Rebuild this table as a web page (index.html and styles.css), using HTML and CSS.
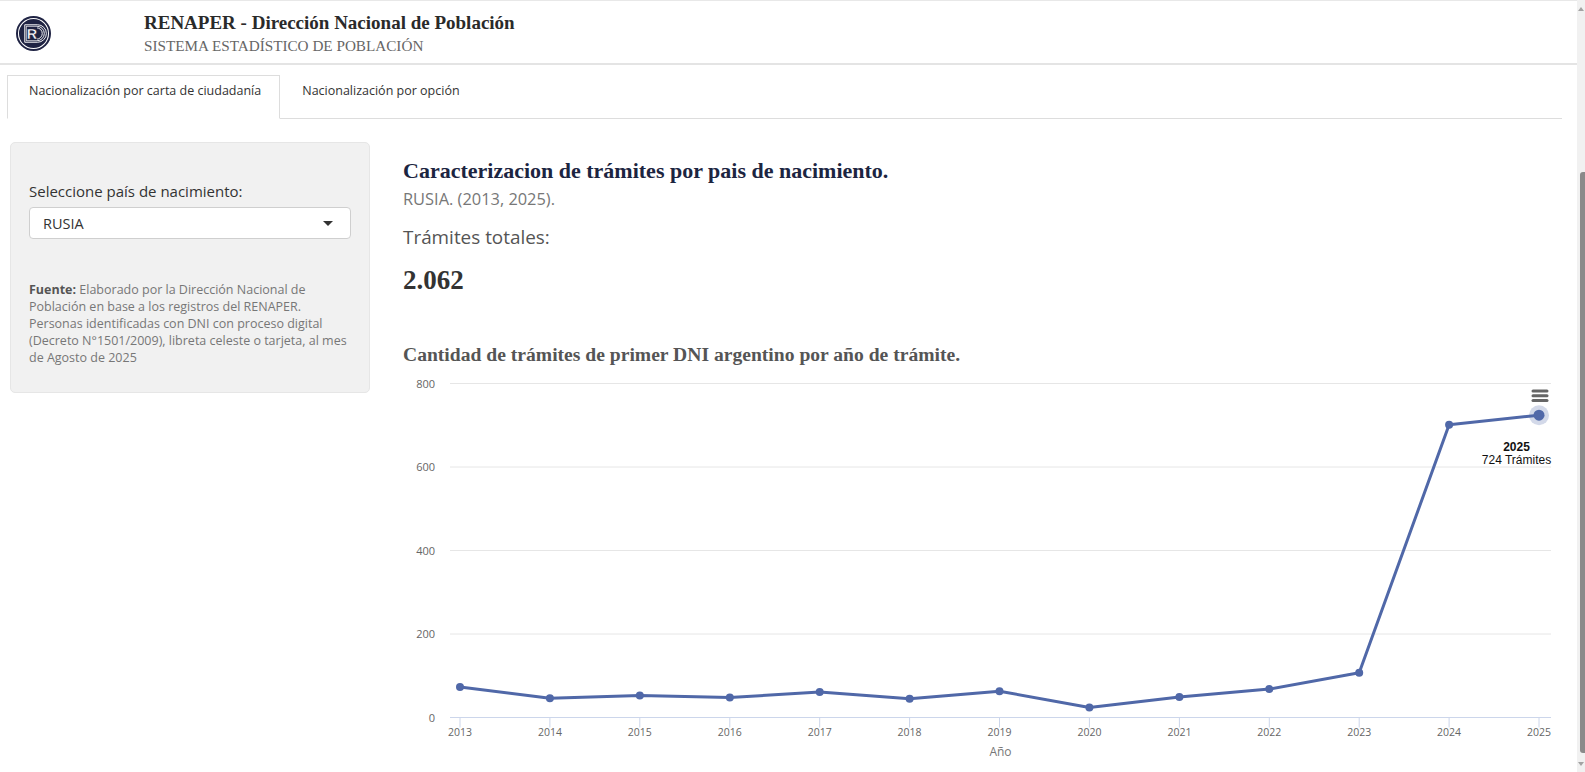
FILE: index.html
```html
<!DOCTYPE html>
<html lang="es">
<head>
<meta charset="utf-8">
<title>RENAPER - Dirección Nacional de Población</title>
<link rel="stylesheet" href="styles.css">
</head>
<body>
<div class="app">
  <div class="page">
    <header class="topbar">
      <svg class="logo" viewBox="0 0 34 34" aria-label="RENAPER">
        <circle cx="17" cy="17" r="17" fill="#1f2343"/>
        <circle cx="17" cy="17" r="14.6" fill="none" stroke="#ffffff" stroke-width="1"/>
        <path d="M8.5 8.5 H21 A8.5 8.5 0 0 1 21 25.5 H8.5 Z" fill="none" stroke="#ffffff" stroke-width="0.9"/>
        <path d="M10 10 H20.5 A7 7 0 0 1 20.5 24 H10 Z" fill="none" stroke="#ffffff" stroke-width="0.9"/>
        <path d="M11.5 11.5 H20 A5.5 5.5 0 0 1 20 22.5 H11.5 Z" fill="none" stroke="#ffffff" stroke-width="0.9"/>
        <rect x="10.5" y="10.5" width="10" height="13" fill="#1f2343"/>
        <text x="15.5" y="22.3" text-anchor="middle" class="logo-r">R</text>
      </svg>
      <div class="brand">
        <div class="brand-title">RENAPER - Dirección Nacional de Población</div>
        <div class="brand-sub">SISTEMA ESTADÍSTICO DE POBLACIÓN</div>
      </div>
    </header>

    <nav class="tabs">
      <a class="tab active" href="#">Nacionalización por carta de ciudadanía</a>
      <a class="tab" href="#">Nacionalización por opción</a>
    </nav>

    <div class="content">
      <aside class="sidebar">
        <label class="field-label">Seleccione país de nacimiento:</label>
        <div class="select">
          <span>RUSIA</span>
          <span class="caret"></span>
        </div>
        <p class="source"><strong>Fuente:</strong> Elaborado por la Dirección Nacional de Población en base a los registros del RENAPER. Personas identificadas con DNI con proceso digital (Decreto N°1501/2009), libreta celeste o tarjeta, al mes de Agosto de 2025</p>
      </aside>

      <main class="main">
        <h2 class="main-title">Caracterizacion de trámites por pais de nacimiento.</h2>
        <div class="subtitle">RUSIA. (2013, 2025).</div>
        <div class="total-label">Trámites totales:</div>
        <div class="total-value">2.062</div>
        <h3 class="chart-title">Cantidad de trámites de primer DNI argentino por año de trámite.</h3>

        <svg class="chart" viewBox="0 0 1161 400">
          <g class="grid">
            <line x1="49" y1="13.5" x2="1150" y2="13.5"/>
            <line x1="49" y1="97" x2="1150" y2="97"/>
            <line x1="49" y1="180.5" x2="1150" y2="180.5"/>
            <line x1="49" y1="264" x2="1150" y2="264"/>
          </g>
          <g class="ylabels">
            <text x="34" y="17.5">800</text>
            <text x="34" y="101">600</text>
            <text x="34" y="184.5">400</text>
            <text x="34" y="268">200</text>
            <text x="34" y="351.5">0</text>
          </g>
          <line class="axis" x1="49" y1="347.5" x2="1150" y2="347.5"/>
          <g class="ticks">
            <line x1="59" y1="347.5" x2="59" y2="357.5"/>
            <line x1="148.9" y1="347.5" x2="148.9" y2="357.5"/>
            <line x1="238.8" y1="347.5" x2="238.8" y2="357.5"/>
            <line x1="328.8" y1="347.5" x2="328.8" y2="357.5"/>
            <line x1="418.7" y1="347.5" x2="418.7" y2="357.5"/>
            <line x1="508.6" y1="347.5" x2="508.6" y2="357.5"/>
            <line x1="598.5" y1="347.5" x2="598.5" y2="357.5"/>
            <line x1="688.4" y1="347.5" x2="688.4" y2="357.5"/>
            <line x1="778.4" y1="347.5" x2="778.4" y2="357.5"/>
            <line x1="868.3" y1="347.5" x2="868.3" y2="357.5"/>
            <line x1="958.2" y1="347.5" x2="958.2" y2="357.5"/>
            <line x1="1048.1" y1="347.5" x2="1048.1" y2="357.5"/>
            <line x1="1138" y1="347.5" x2="1138" y2="357.5"/>
          </g>
          <g class="xlabels">
            <text x="59" y="365.5">2013</text>
            <text x="148.9" y="365.5">2014</text>
            <text x="238.8" y="365.5">2015</text>
            <text x="328.8" y="365.5">2016</text>
            <text x="418.7" y="365.5">2017</text>
            <text x="508.6" y="365.5">2018</text>
            <text x="598.5" y="365.5">2019</text>
            <text x="688.4" y="365.5">2020</text>
            <text x="778.4" y="365.5">2021</text>
            <text x="868.3" y="365.5">2022</text>
            <text x="958.2" y="365.5">2023</text>
            <text x="1048.1" y="365.5">2024</text>
            <text x="1138" y="365.5">2025</text>
          </g>
          <text class="xtitle" x="599.5" y="386">Año</text>

          <polyline class="series" points="59,317 148.9,328.3 238.8,325.4 328.8,327.5 418.7,322 508.6,328.7 598.5,321.2 688.4,337.5 778.4,327 868.3,319.1 958.2,302.8 1048.1,54.8 1138,45.2"/>
          <g class="points">
            <circle cx="59" cy="317" r="4"/>
            <circle cx="148.9" cy="328.3" r="4"/>
            <circle cx="238.8" cy="325.4" r="4"/>
            <circle cx="328.8" cy="327.5" r="4"/>
            <circle cx="418.7" cy="322" r="4"/>
            <circle cx="508.6" cy="328.7" r="4"/>
            <circle cx="598.5" cy="321.2" r="4"/>
            <circle cx="688.4" cy="337.5" r="4"/>
            <circle cx="778.4" cy="327" r="4"/>
            <circle cx="868.3" cy="319.1" r="4"/>
            <circle cx="958.2" cy="302.8" r="4"/>
            <circle cx="1048.1" cy="54.8" r="4"/>
          </g>
          <circle class="halo" cx="1138" cy="45.2" r="10"/>
          <circle class="hover-point" cx="1138" cy="45.2" r="5.5"/>

          <g class="menu">
            <line x1="1132" y1="21" x2="1146" y2="21"/>
            <line x1="1132" y1="25.8" x2="1146" y2="25.8"/>
            <line x1="1132" y1="30.6" x2="1146" y2="30.6"/>
          </g>

          <text class="tip-year" x="1115.5" y="81.3">2025</text>
          <text class="tip-value" x="1115.5" y="94.3">724 Trámites</text>
        </svg>
      </main>
    </div>
  </div>
  <div class="scrollbar">
    <span class="sb-up"></span>
    <span class="sb-thumb"></span>
    <span class="sb-down"></span>
  </div>
</div>
</body>
</html>
```

FILE: styles.css
```css
html, body {
  margin: 0;
  height: 100%;
  overflow: hidden;
}

body {
  font-family: "Open Sans", "Noto Sans", sans-serif;
  color: #333;
  background: #fff;
}

.app {
  display: flex;
  height: 100%;
}

.page {
  flex: 1;
  min-width: 0;
}

/* ---------- header ---------- */
.topbar {
  display: flex;
  align-items: flex-start;
  height: 62px;
  border-top: 1px solid #e8e8e8;
  border-bottom: 2px solid #e4e4e4;
}

.logo {
  width: 35px;
  height: 35px;
  margin: 15px 0 0 16px;
  flex: none;
}

.logo-r {
  font-family: "Liberation Sans", sans-serif;
  font-weight: 700;
  font-size: 14px;
  fill: #ffffff;
  stroke: #1f2343;
  stroke-width: 0.4;
}

.brand {
  margin-left: 93px;
  padding-top: 10.6px;
}

.brand-title {
  font-family: "Liberation Serif", serif;
  font-weight: 700;
  font-size: 19px;
  line-height: 22px;
  color: #2a2a2a;
}

.brand-sub {
  font-family: "Liberation Serif", serif;
  font-size: 15.2px;
  line-height: 20px;
  color: #666;
  margin-top: 2.3px;
}

/* ---------- tabs ---------- */
.tabs {
  display: flex;
  height: 43px;
  margin: 10px 15px 0 7px;
  border-bottom: 1px solid #dddddd;
}

.tab {
  box-sizing: border-box;
  height: 44px;
  margin-bottom: -1px;
  padding: 5px 18px 0 21px;
  border: 1px solid transparent;
  font-size: 12.5px;
  line-height: 20px;
  color: #333;
  text-decoration: none;
}

.tab.active {
  border-color: #dddddd #dddddd #ffffff;
  background: #fff;
}

/* ---------- content ---------- */
.content {
  display: flex;
  align-items: flex-start;
  padding: 23px 15px 0 10px;
}

.sidebar {
  box-sizing: border-box;
  flex: none;
  width: 360px;
  background: #f1f1f1;
  border: 1px solid #e6e6e6;
  border-radius: 5px;
  padding: 38px 18px 26.5px;
}

.field-label {
  display: block;
  font-size: 15px;
  line-height: 21px;
  color: #333;
}

.select {
  box-sizing: border-box;
  display: flex;
  align-items: center;
  justify-content: space-between;
  height: 32px;
  margin-top: 5px;
  padding: 0 17px 0 13px;
  background: #fff;
  border: 1px solid #cfcfcf;
  border-radius: 4px;
  font-size: 14.5px;
  color: #333;
}

.caret {
  width: 0;
  height: 0;
  border-left: 5px solid transparent;
  border-right: 5px solid transparent;
  border-top: 5px solid #333;
}

.source {
  margin: 41.5px 0 0;
  font-size: 12.5px;
  line-height: 17px;
  color: #777;
}

.source strong {
  color: #555;
  font-weight: 700;
}

.main {
  flex: 1;
  min-width: 0;
  margin-left: 33px;
}

.main-title {
  margin: 16.5px 0 0;
  font-family: "Liberation Serif", serif;
  font-weight: 700;
  font-size: 22px;
  line-height: 24px;
  color: #1c2541;
}

.subtitle {
  margin-top: 6.8px;
  font-size: 16.4px;
  line-height: 20px;
  color: #777;
}

.total-label {
  margin-top: 16.6px;
  font-size: 18.9px;
  line-height: 22px;
  color: #555;
}

.total-value {
  margin-top: 18.6px;
  font-family: "Liberation Serif", serif;
  font-weight: 700;
  font-size: 27px;
  line-height: 28px;
  color: #333;
}

.chart-title {
  margin: 49.5px 0 0;
  font-family: "Liberation Serif", serif;
  font-weight: 700;
  font-size: 19.6px;
  line-height: 22px;
  color: #555;
}

/* ---------- chart ---------- */
.chart {
  display: block;
  width: 1161px;
  height: 400px;
  margin: 4px 0 0 -2px;
}

.grid line {
  stroke: #e6e6e6;
  stroke-width: 1;
}

.axis,
.ticks line {
  stroke: #ccd6eb;
  stroke-width: 1;
}

.ylabels text {
  font-family: "Open Sans", sans-serif;
  font-size: 11px;
  fill: #666;
  text-anchor: end;
}

.xlabels text {
  font-family: "Open Sans", sans-serif;
  font-size: 10.5px;
  fill: #666;
  text-anchor: middle;
}

.xtitle {
  font-family: "Open Sans", sans-serif;
  font-size: 12px;
  fill: #777;
  text-anchor: middle;
}

.series {
  fill: none;
  stroke: #5068a8;
  stroke-width: 3;
  stroke-linejoin: round;
  stroke-linecap: round;
}

.points circle,
.hover-point {
  fill: #5068a8;
}

.halo {
  fill: rgba(80, 104, 168, 0.25);
}

.menu line {
  stroke: #666;
  stroke-width: 3;
  stroke-linecap: round;
}

.tip-year,
.tip-value {
  font-family: "Liberation Sans", Arial, sans-serif;
  font-size: 12px;
  text-anchor: middle;
  fill: #111;
}

.tip-year {
  font-weight: 700;
}

/* ---------- scrollbar ---------- */
.scrollbar {
  flex: none;
  width: 8px;
  background: #f1f1f1;
  display: flex;
  flex-direction: column;
  align-items: flex-end;
}

.sb-up {
  width: 0;
  height: 0;
  margin: 7px 1px 0 0;
  border-left: 3px solid transparent;
  border-right: 3px solid transparent;
  border-bottom: 4px solid #a3a3a3;
}

.sb-thumb {
  width: 5px;
  height: 581px;
  margin-top: 161px;
  background: #8a8a8a;
  border-radius: 3px 0 0 3px;
}

.sb-down {
  width: 0;
  height: 0;
  margin: auto 1px 6px 0;
  border-left: 3px solid transparent;
  border-right: 3px solid transparent;
  border-top: 4px solid #a3a3a3;
}
```
